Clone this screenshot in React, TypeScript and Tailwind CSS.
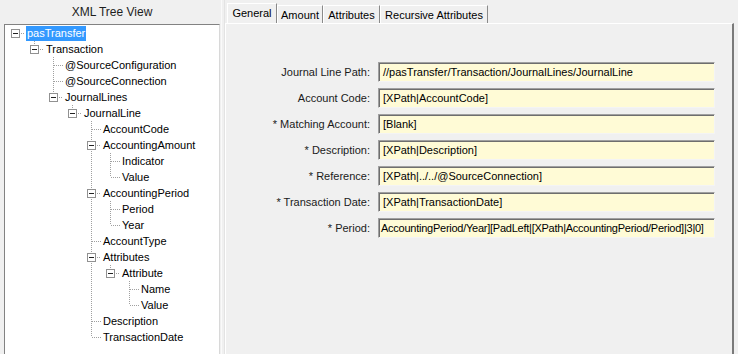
import React from 'react';

type TreeNode = { name: string; children?: TreeNode[] };

const tree: TreeNode = {
  name: 'pasTransfer',
  children: [
    {
      name: 'Transaction',
      children: [
        { name: '@SourceConfiguration' },
        { name: '@SourceConnection' },
        {
          name: 'JournalLines',
          children: [
            {
              name: 'JournalLine',
              children: [
                { name: 'AccountCode' },
                { name: 'AccountingAmount', children: [{ name: 'Indicator' }, { name: 'Value' }] },
                { name: 'AccountingPeriod', children: [{ name: 'Period' }, { name: 'Year' }] },
                { name: 'AccountType' },
                {
                  name: 'Attributes',
                  children: [{ name: 'Attribute', children: [{ name: 'Name' }, { name: 'Value' }] }],
                },
                { name: 'Description' },
                { name: 'TransactionDate' },
              ],
            },
          ],
        },
      ],
    },
  ],
};

type Row = { name: string; level: number; hasChildren: boolean; lasts: boolean[] };

// lasts[k] = node on the path at level k is the last of its siblings
function flatten(node: TreeNode, level: number, lasts: boolean[], out: Row[]) {
  out.push({ name: node.name, level, hasChildren: !!node.children?.length, lasts });
  node.children?.forEach((c, i) => {
    flatten(c, level + 1, [...lasts, i === node.children!.length - 1], out);
  });
  return out;
}

const rows = flatten(tree, 0, [true], []);

const LINE = '#a0a0a0';

function Cell({ top, bottom, horiz, expander }: { top?: boolean; bottom?: boolean; horiz?: boolean; expander?: boolean }) {
  return (
    <svg width="19" height="16" className="shrink-0 block">
      {top && <line x1="9.5" y1="0" x2="9.5" y2="8" stroke={LINE} strokeDasharray="1 1" />}
      {bottom && <line x1="9.5" y1="8" x2="9.5" y2="16" stroke={LINE} strokeDasharray="1 1" />}
      {horiz && !expander && <line x1="10" y1="8.5" x2="19" y2="8.5" stroke={LINE} strokeDasharray="1 1" />}
      {expander && (
        <>
          <line x1="15" y1="8.5" x2="19" y2="8.5" stroke={LINE} strokeDasharray="1 1" />
          <rect x="5.5" y="4.5" width="8" height="8" fill="#fff" stroke="#919191" />
          <line x1="7" y1="8.5" x2="12" y2="8.5" stroke="#222" />
        </>
      )}
    </svg>
  );
}

function TreeRow({ row, selected }: { row: Row; selected?: boolean }) {
  const cells = [];
  for (let k = 0; k <= row.level; k++) {
    if (k < row.level) {
      cells.push(<Cell key={k} top={k > 0 && !row.lasts[k]} bottom={k > 0 && !row.lasts[k]} />);
    } else {
      cells.push(
        <Cell
          key={k}
          top={k > 0}
          bottom={k > 0 && !row.lasts[k]}
          horiz
          expander={row.hasChildren}
        />
      );
    }
  }
  return (
    <div className="flex items-center h-[16px]">
      {cells}
      <span
        className={`ml-[1px] px-[1px] leading-[15px] h-[15px] whitespace-nowrap ${
          selected ? 'bg-[#3399ff] text-white' : 'text-black'
        }`}
      >
        {row.name}
      </span>
    </div>
  );
}

// Period field is scrolled to its end in the original, so only the visible tail is shown
const fields = [
  { label: 'Journal Line Path:', value: '//pasTransfer/Transaction/JournalLines/JournalLine' },
  { label: 'Account Code:', value: '[XPath|AccountCode]' },
  { label: '* Matching Account:', value: '[Blank]' },
  { label: '* Description:', value: '[XPath|Description]' },
  { label: '* Reference:', value: '[XPath|../../@SourceConnection]' },
  { label: '* Transaction Date:', value: '[XPath|TransactionDate]' },
  { label: '* Period:', value: 'AccountingPeriod/Year][PadLeft|[XPath|AccountingPeriod/Period]|3|0]', tight: true },
];

const tabs = [
  { name: 'General', w: 'w-[50px]' },
  { name: 'Amount', w: 'w-[46px]' },
  { name: 'Attributes', w: 'w-[57px]' },
  { name: 'Recursive Attributes', w: 'w-[108px]' },
];

export default function App() {
  return (
    <div className="w-[738px] h-[354px] bg-[#f0f0f0] flex overflow-hidden font-['Liberation_Sans',Arial,sans-serif] text-[11px] text-black">
      {/* Tree view */}
      <div className="w-[220px] flex flex-col shrink-0">
        <div className="h-[24px] flex items-center justify-center pl-[4px] text-[12px] text-[#1e1e1e]">XML Tree View</div>
        <div className="ml-[4px] w-[216px] flex-1 bg-white border-t border-l border-t-[#828282] border-l-[#828282] border-r border-r-[#d8d8d8] pl-[1px] overflow-hidden">
          {rows.map((r, i) => (
            <TreeRow key={i} row={r} selected={i === 0} />
          ))}
        </div>
      </div>

      {/* splitter */}
      <div className="w-[5px] shrink-0 flex">
        <div className="w-[1px] ml-[1px] h-full bg-[#fafafa]" />
        <div className="w-[1px] ml-[2px] h-full bg-[#e3e3e3]" />
      </div>

      {/* Tabs + panel */}
      <div className="flex-1 flex flex-col pt-[3px] pr-[4px]">
        <div className="flex items-end h-[20px] pl-[2px]">
          {tabs.map((t, i) => (
            <div
              key={t.name}
              className={`${t.w} flex items-center justify-center border-t border-l border-t-white border-l-white border-r border-r-[#8a8a8a] whitespace-nowrap ${
                i === 0 ? 'h-[20px] pb-[1px]' : 'h-[18px] pt-[1px]'
              }`}
            >
              {t.name}
            </div>
          ))}
        </div>
        <div className="flex-1 border-t border-l border-t-white border-l-white border-r-2 border-r-[#7a7a7a] pt-[38px]">
          <div className="grid grid-cols-[144px_337px] gap-x-[8px] gap-y-[6px]">
            {fields.map((f) => (
              <React.Fragment key={f.label}>
                <div className="h-[20px] flex items-center justify-end whitespace-nowrap text-[#1a1a1a]">{f.label}</div>
                <div
                  className={`h-[20px] flex items-center bg-[#fffbd6] border border-t-[#a0a0a0] border-l-[#a0a0a0] border-b-[#f4f4f4] border-r-[#f4f4f4] shadow-[inset_1px_1px_0_#6e6e6e] overflow-hidden whitespace-nowrap ${
                    f.tight ? 'pl-[2px] tracking-[-0.25px]' : 'pl-[4px]'
                  }`}
                >
                  <span>{f.value}</span>
                </div>
              </React.Fragment>
            ))}
          </div>
        </div>
      </div>
    </div>
  );
}
